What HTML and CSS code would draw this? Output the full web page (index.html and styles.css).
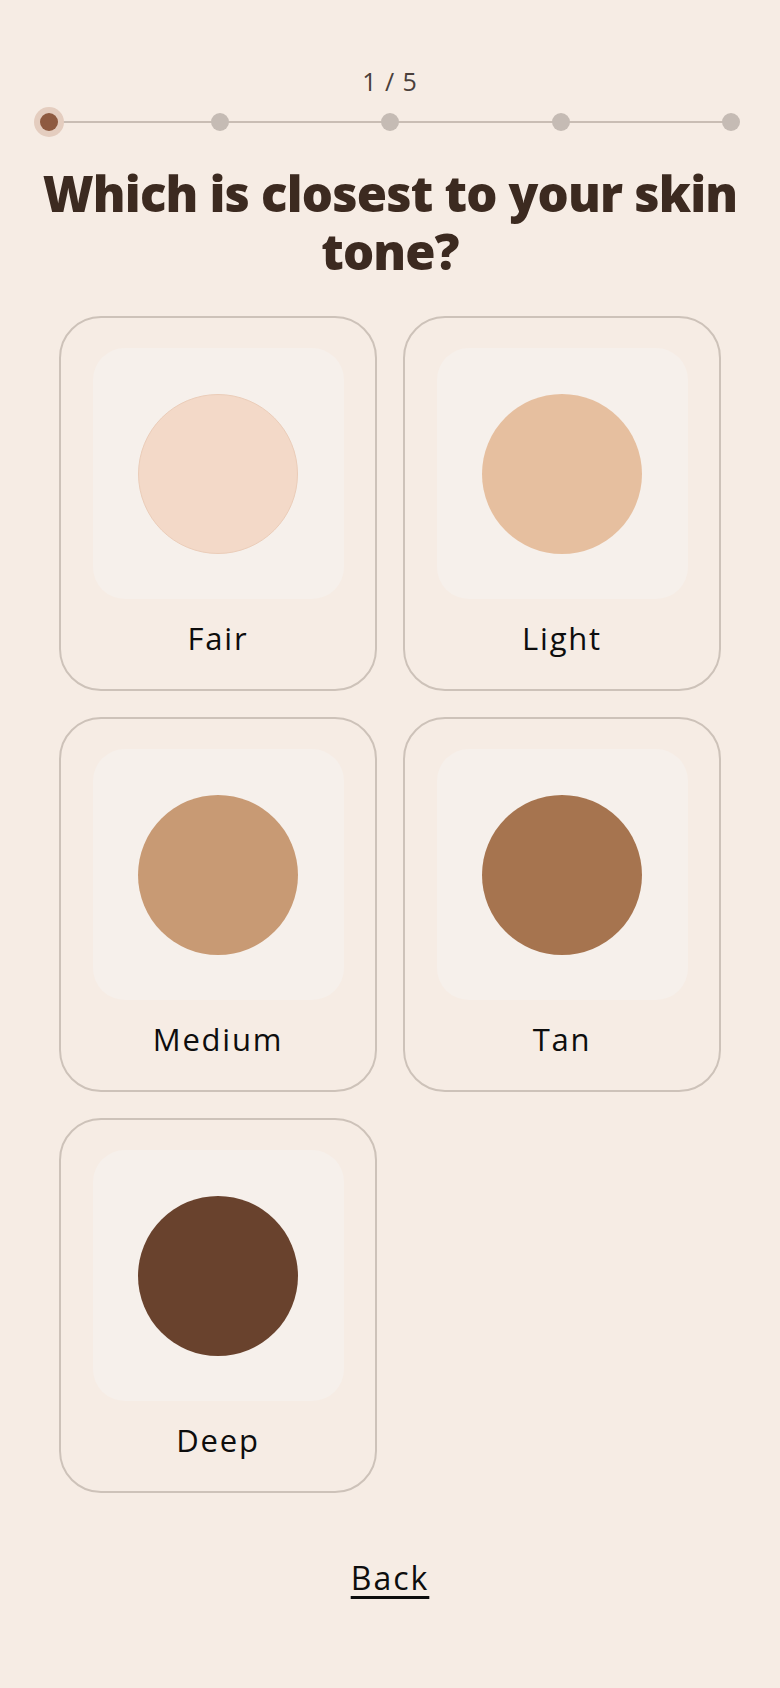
FILE: index.html
```html
<!DOCTYPE html>
<html lang="en">
<head>
<meta charset="utf-8">
<title>Skin tone</title>
<link rel="stylesheet" href="styles.css">
</head>
<body>
<main class="page">
  <div class="progress">
    <div class="step-count">1 / 5</div>
    <div class="track">
      <span class="dot active"></span>
      <span class="dot"></span>
      <span class="dot"></span>
      <span class="dot"></span>
      <span class="dot"></span>
    </div>
  </div>
  <h1 class="title">Which is closest to your skin tone?</h1>
  <div class="grid">
    <button class="card"><span class="swatch-box"><span class="swatch fair"></span></span><span class="label">Fair</span></button>
    <button class="card"><span class="swatch-box"><span class="swatch light"></span></span><span class="label">Light</span></button>
    <button class="card"><span class="swatch-box"><span class="swatch medium"></span></span><span class="label">Medium</span></button>
    <button class="card"><span class="swatch-box"><span class="swatch tan"></span></span><span class="label">Tan</span></button>
    <button class="card"><span class="swatch-box"><span class="swatch deep"></span></span><span class="label">Deep</span></button>
  </div>
  <div class="footer"><a class="back" href="#">Back</a></div>
</main>
</body>
</html>
```
FILE: styles.css
```css
* { box-sizing: border-box; }
html, body { margin: 0; padding: 0; }
body {
  background: #f6ece4;
  font-family: "Open Sans", "Liberation Sans", sans-serif;
  color: #111;
  min-height: 1688px;
}
.page {
  display: flex;
  flex-direction: column;
  padding: 0 40px;
}
.progress {
  display: flex;
  flex-direction: column;
  align-items: stretch;
  padding-top: 64px;
}
.step-count {
  text-align: center;
  font-size: 25px;
  line-height: 34px;
  color: #4a403b;
  letter-spacing: 1px;
}
.track {
  position: relative;
  display: flex;
  justify-content: space-between;
  align-items: center;
  height: 30px;
  margin-top: 9px;
}
.track::before {
  content: "";
  position: absolute;
  left: 9px;
  right: 9px;
  top: 14px;
  height: 2px;
  background: #c9bdb4;
}
.dot {
  position: relative;
  width: 18px;
  height: 18px;
  border-radius: 50%;
  background: #c5bbb4;
}
.dot.active {
  background: #8e5a40;
  box-shadow: 0 0 0 6px #e4cdbf;
}
.title {
  margin: 27px -20px 0;
  text-align: center;
  font-size: 49px;
  line-height: 58px;
  font-weight: 800;
  color: #3c2a20;
  letter-spacing: -0.8px;
}
.grid {
  display: grid;
  grid-template-columns: 318px 318px;
  gap: 26px;
  justify-content: center;
  margin-top: 36px;
}
.card {
  display: flex;
  flex-direction: column;
  align-items: center;
  height: 375px;
  padding: 30px 0 0;
  background: transparent;
  border: 2px solid #cdc2b9;
  border-radius: 42px;
  font: inherit;
  cursor: pointer;
}
.swatch-box {
  display: flex;
  align-items: center;
  justify-content: center;
  width: 251px;
  height: 251px;
  border-radius: 32px;
  background: #f6f0eb;
}
.swatch {
  width: 160px;
  height: 160px;
  border-radius: 50%;
}
.swatch.fair { background: #f3d9c8; border: 1px solid #ebcdb9; }
.swatch.light { background: #e6bf9f; }
.swatch.medium { background: #c89a74; }
.swatch.tan { background: #a6744f; }
.swatch.deep { background: #69422d; }
.label {
  margin-top: 19px;
  font-size: 31px;
  line-height: 40px;
  color: #0d0d0d;
  letter-spacing: 1.8px;
}
.footer {
  display: flex;
  justify-content: center;
  margin-top: 65px;
}
.back {
  font-size: 32px;
  line-height: 40px;
  color: #0d0d0d;
  letter-spacing: 2px;
  text-decoration: underline;
  text-decoration-thickness: 2.5px;
  text-underline-offset: 6px;
}
```
